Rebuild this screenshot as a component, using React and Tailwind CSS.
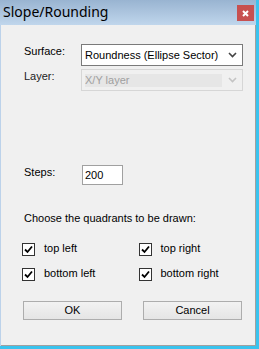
import React from "react";

function Check() {
  return (
    <div className="w-[13px] h-[13px] border border-[#333333] bg-white flex items-center justify-center shrink-0">
      <svg width="9" height="9" viewBox="0 0 9 9">
        <polyline points="1,4.5 3.5,7 8,1.5" fill="none" stroke="#000" strokeWidth="1.8" />
      </svg>
    </div>
  );
}

function Chevron({ color }) {
  return (
    <svg width="9" height="6" viewBox="0 0 9 6">
      <polyline points="1,1 4.5,4.5 8,1" fill="none" stroke={color} strokeWidth="1.6" />
    </svg>
  );
}

function CheckItem({ label }) {
  return (
    <div className="w-[121px] flex items-center">
      <Check />
      <span className="ml-[9px] leading-[13px] -mt-[2px]">{label}</span>
    </div>
  );
}

export default function App() {
  return (
    <div
      className="w-[259px] h-[349px] flex flex-col bg-[#bcd2ea] border-r-[3px] border-b-[3px] border-[#3ac3ee] text-[11px] text-black"
      style={{ fontFamily: '"Liberation Sans", Arial, sans-serif' }}
    >
      <div className="h-[25px] shrink-0 flex items-start bg-gradient-to-b from-[#99b4d1] to-[#c0d6ec]">
        <span
          className="ml-[3px] mt-[2px] text-[14px] leading-[20px] text-black"
          style={{ fontFamily: '"Noto Sans", "Open Sans", sans-serif' }}
        >
          Slope/Rounding
        </span>
        <div className="ml-auto mr-[2px] mt-[5px] w-[17px] h-[16px] bg-[#c75050] flex items-center justify-center">
          <svg width="7" height="7" viewBox="0 0 7 7">
            <path d="M1 1 L6 6 M6 1 L1 6" stroke="#fff" strokeWidth="2" />
          </svg>
        </div>
      </div>
      <div className="flex-1 ml-[1px] bg-[#f0f0f0] border-r border-b border-[#a0a0a0] flex flex-col pl-[21px]">
        <div className="mt-[19px] flex items-start">
          <span className="w-[59px] pl-[2px] pt-[1px] leading-[13px]">Surface:</span>
          <div className="w-[162px] h-[22px] border border-[#7a7a7a] bg-white flex items-center pl-[3px] pr-[5px]">
            <span className="leading-[13px]">Roundness (Ellipse Sector)</span>
            <span className="ml-auto"><Chevron color="#444444" /></span>
          </div>
        </div>
        <div className="mt-[3px] flex items-start">
          <span className="w-[59px] pl-[2px] pt-[1px] leading-[13px] text-[#222]">Layer:</span>
          <div className="w-[162px] h-[22px] border border-[#d6d6d6] bg-[#f0f0f0] flex items-center pl-[3px] pr-[5px]">
            <div className="w-[137px] h-[13px] bg-[#e6e6e6] flex items-center">
              <span className="leading-[13px] text-[#a0a0a0]">X/Y layer</span>
            </div>
            <span className="ml-auto"><Chevron color="#c4c4c4" /></span>
          </div>
        </div>
        <div className="mt-[74px] flex items-start">
          <span className="w-[60px] pl-[2px] pt-[1px] leading-[13px]">Steps:</span>
          <div className="w-[41px] h-[20px] border border-[#a0a0a0] bg-white flex items-center pl-[2px]">
            <span className="leading-[13px]">200</span>
          </div>
        </div>
        <div className="mt-[27px] pl-[2px] leading-[13px]">Choose the quadrants to be drawn:</div>
        <div className="mt-[18px] flex">
          <CheckItem label="top left" />
          <CheckItem label="top right" />
        </div>
        <div className="mt-[12px] flex">
          <CheckItem label="bottom left" />
          <CheckItem label="bottom right" />
        </div>
        <div className="mt-[20px] flex pl-[1px]">
          <div className="w-[99px] h-[19px] border border-[#adadad] bg-gradient-to-b from-[#f2f2f2] to-[#e5e5e5] flex items-center justify-center">
            OK
          </div>
          <div className="ml-[21px] w-[99px] h-[19px] border border-[#adadad] bg-gradient-to-b from-[#f2f2f2] to-[#e5e5e5] flex items-center justify-center">
            Cancel
          </div>
        </div>
      </div>
    </div>
  );
}
